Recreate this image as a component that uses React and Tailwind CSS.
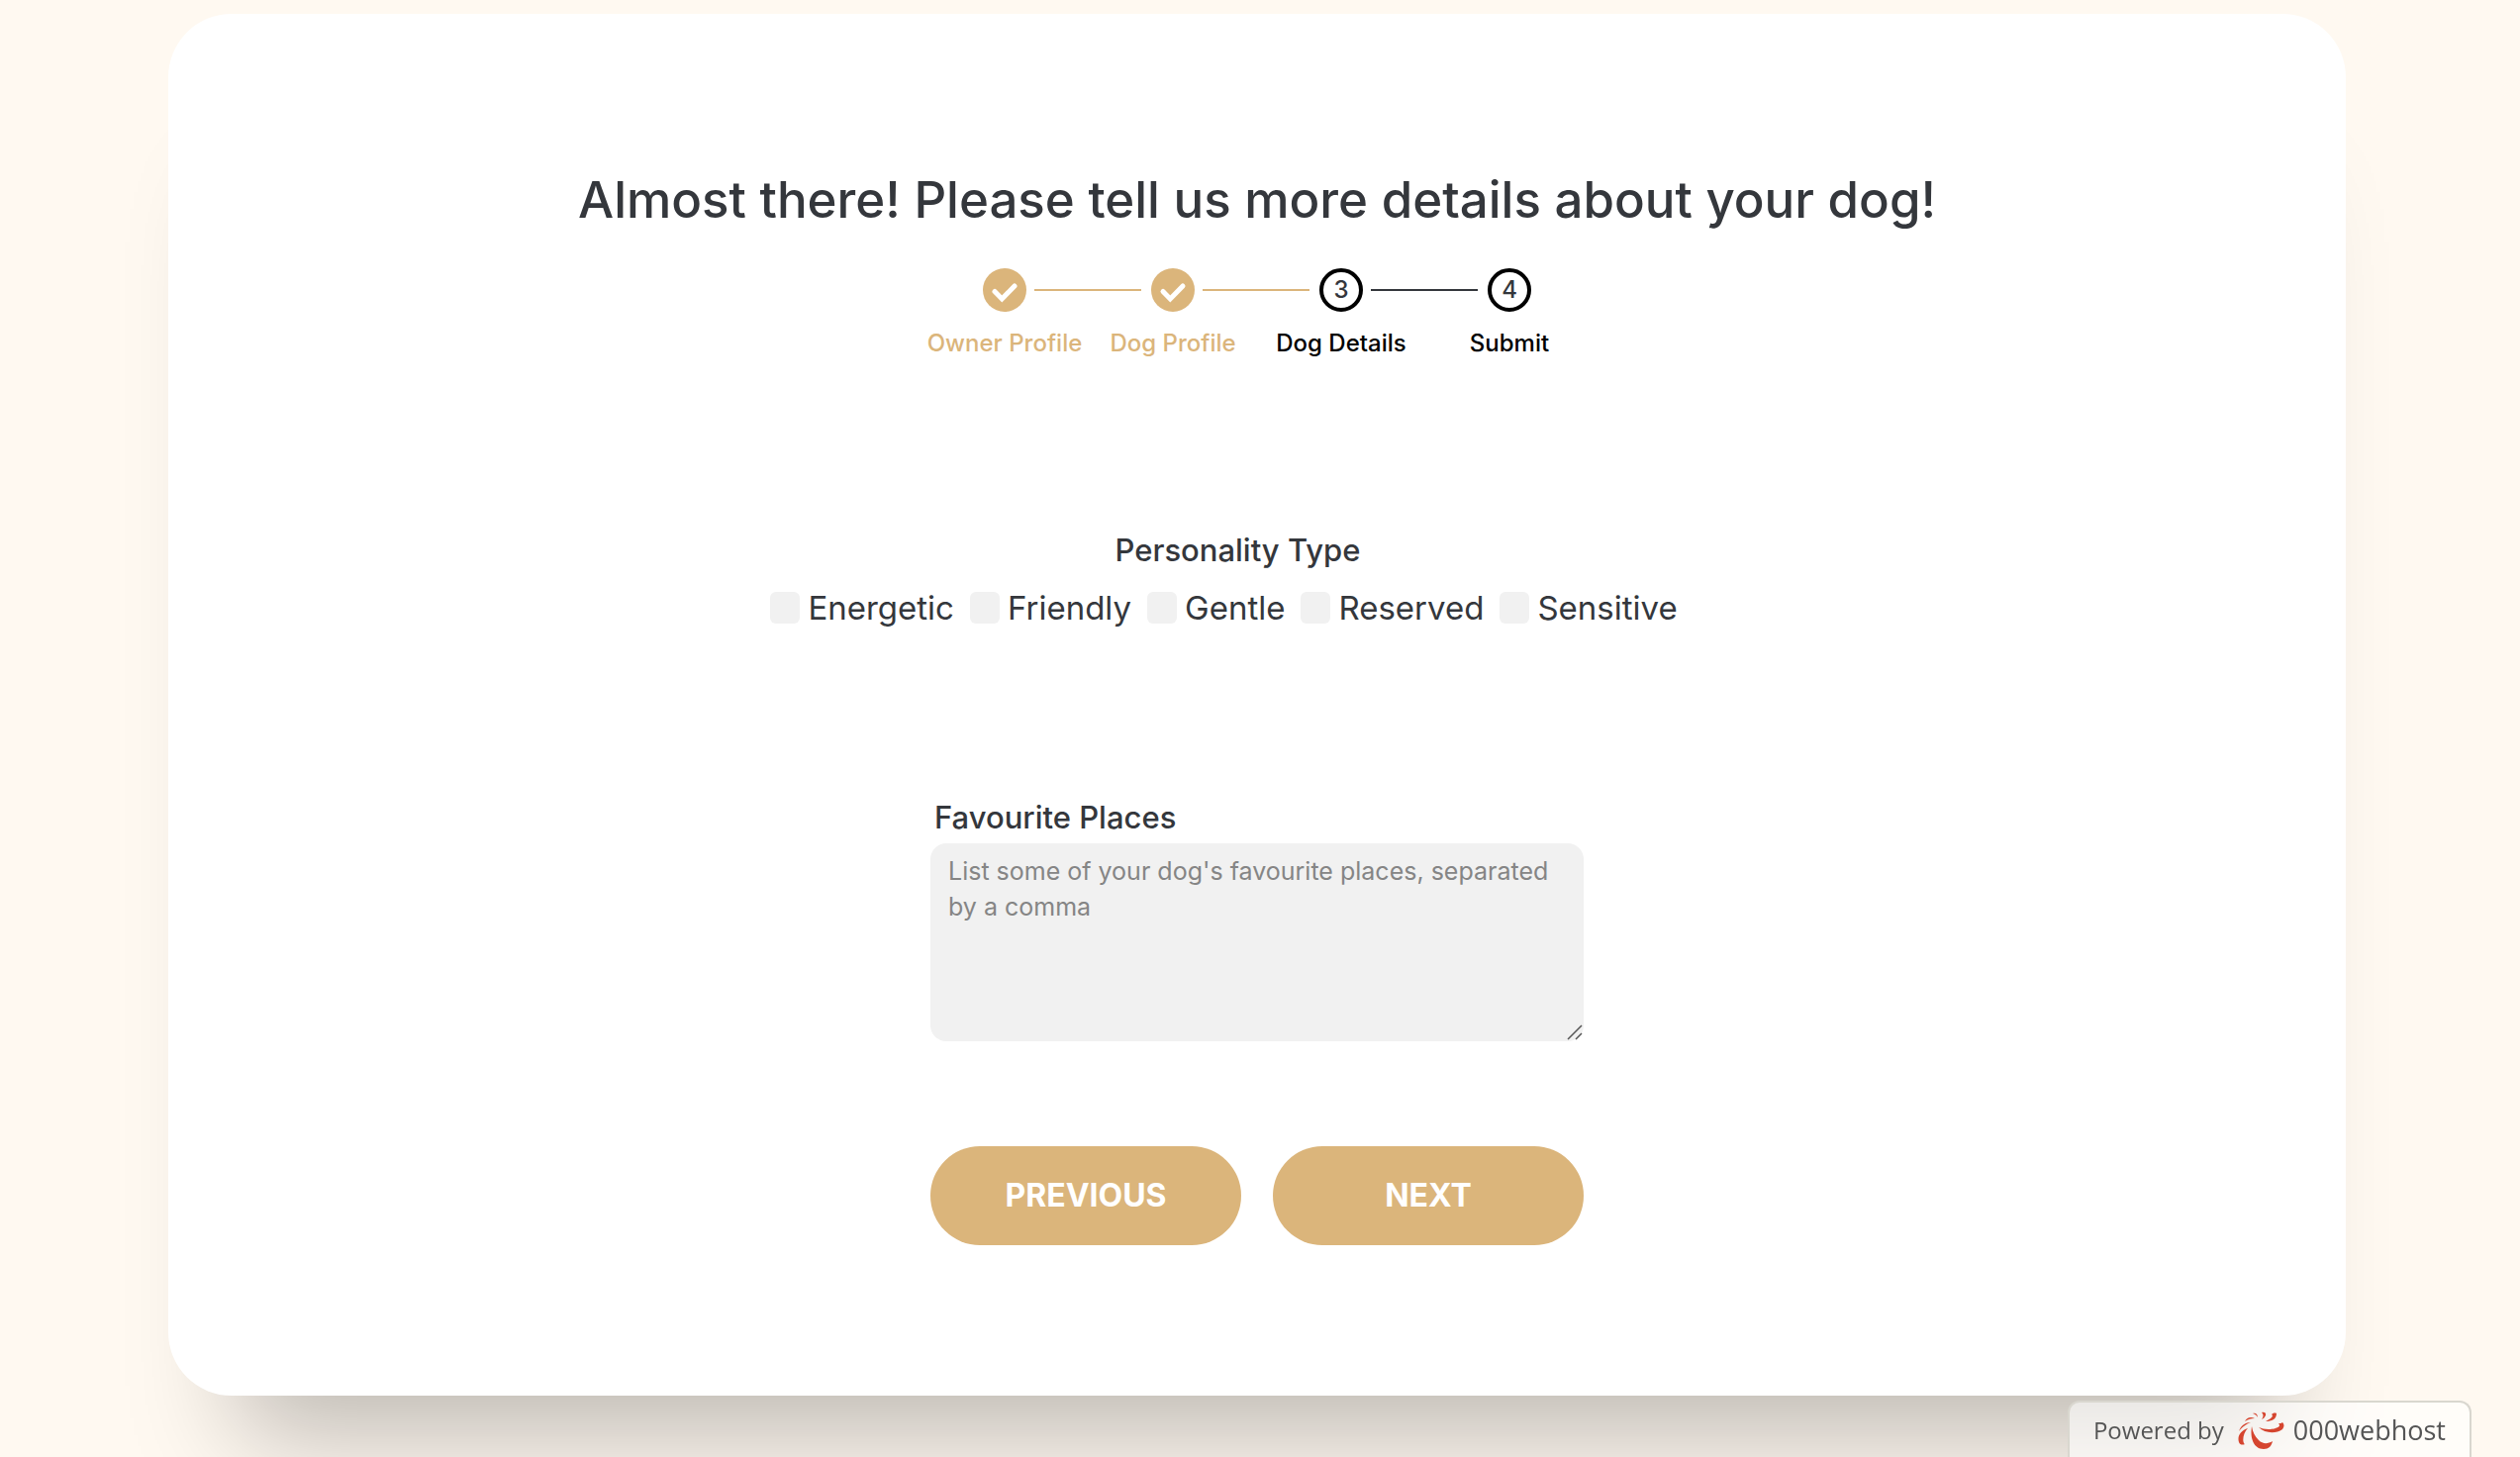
const steps = [
  { label: "Owner Profile", done: true },
  { label: "Dog Profile", done: true },
  { label: "Dog Details", done: false },
  { label: "Submit", done: false },
];

const personalities = ["Energetic", "Friendly", "Gentle", "Reserved", "Sensitive"];

function Step({ label, done, number, last }) {
  return (
    <li className="flex w-[170px] flex-col items-center">
      <div className="grid w-full grid-cols-[1fr_44px_1fr] items-center">
        <span />
        {done ? (
          <span className="size-11 rounded-full bg-[#dbb57b] text-white">
            <svg viewBox="0 0 44 44" className="size-11" fill="none" stroke="currentColor" strokeWidth="5" aria-hidden="true">
              <path d="M12 23.5 19.3 31 32 18" strokeLinecap="round" />
            </svg>
          </span>
        ) : (
          <span className="flex size-11 items-center justify-center rounded-full border-4 border-black text-2xl font-medium">
            {number}
          </span>
        )}
        {!last && (
          <span className={done ? "ml-2 -mr-[53px] h-0.5 bg-[#dbb57b]" : "ml-2 -mr-[53px] h-0.5 bg-[#34373c]"} />
        )}
      </div>
      <span
        className={
          done
            ? "mt-3.5 whitespace-nowrap text-2xl leading-9 font-medium text-[#dbb57b]"
            : "mt-3.5 whitespace-nowrap text-2xl leading-9 font-medium text-black"
        }
      >
        {label}
      </span>
    </li>
  );
}

function HostMark() {
  return (
    <svg viewBox="12 11 48 40" className="mr-2 ml-3.5 h-10 w-12" fill="#d5452f" aria-hidden="true">
      <path d="M26 27 C24 39 28 50 38 50 C43 50 46 47 47 42 C42 45 37 45 33 41 C29 37 27 33 26 27Z" />
      <path d="M33 28 C39 34 50 35 57 30 C59 27 59 25 57 23 C56 24 55 24 53 24 C57 28 48 30 43 30 C39 30 36 29 33 28Z" />
      <path d="M40 22 C46 22 51 20 51 14 C49 13 47 14 46 15 C49 17 44 20 40 22Z" />
      <path d="M36 13 C38 12 41 13 40 16 C39 18 38 19 36 20 C38 17 38 15 36 13Z" />
      <path d="M22 29 C15 31 11 37 13 43 C14 46 17 46 19 45 C16 43 17 34 22 29Z" />
      <path d="M25 23 C20 23 15 26 13 32 C17 27 20 25 25 23Z" />
      <path d="M29 19 C25 17 21 18 19 22 C22 20 25 19 29 19Z" />
      <path d="M32 18 C32 15 30 13 27 14 C30 15 31 16 32 18Z" />
    </svg>
  );
}

export default function App() {
  return (
    <div className="min-h-screen overflow-hidden bg-[#fff9f1] pt-3.5 font-['Inter',sans-serif] text-[#34373c]">
      <main className="mr-[176px] ml-[170px] flex min-h-[1396px] flex-col items-center rounded-[64px] bg-white pt-[148px] shadow-[0_110px_100px_-70px_rgba(0,0,0,0.26)]">
        <h1 className="text-[51px] leading-[80px] font-medium">
          Almost there! Please tell us more details about your dog!
        </h1>
        <ol className="mt-[29px] flex">
          {steps.map((s, i) => (
            <Step key={s.label} {...s} number={i + 1} last={i === steps.length - 1} />
          ))}
        </ol>
        <form className="mt-[169px] flex flex-col items-center">
          <fieldset className="mr-[67px] flex flex-col items-center">
            <legend className="mx-auto pl-7 text-[31px] leading-11 font-medium">Personality Type</legend>
            <div className="mt-3 flex gap-4">
              {personalities.map((p) => (
                <label key={p} className="flex items-center gap-2 text-[33px] leading-12">
                  <input type="checkbox" className="h-8 w-[30px] appearance-none rounded-md bg-[#f1f1f1] checked:bg-[#dbb57b]" />
                  {p}
                </label>
              ))}
            </div>
          </fieldset>
          <div className="mt-[166px] w-[660px]">
            <label htmlFor="places" className="ml-1 block text-[31px] leading-11 font-medium">
              Favourite Places
            </label>
            <div className="relative mt-1">
              <textarea
                id="places"
                placeholder="List some of your dog's favourite places, separated by a comma"
                className="block h-[200px] w-full resize-none rounded-2xl bg-[#f1f1f1] px-[18px] py-2.5 text-[25px] leading-9 placeholder:text-[#858585]"
              />
              <svg viewBox="0 0 16 16" className="absolute right-px bottom-px size-4" stroke="#555" strokeWidth="1.5" aria-hidden="true">
                <path d="M1 15 15 1M9 15l6-6" />
              </svg>
            </div>
            <div className="mt-[106px] grid grid-cols-2 gap-8">
              <button type="button" className="h-[100px] rounded-[50px] bg-[#dbb57b] text-[32px] font-bold text-white">
                PREVIOUS
              </button>
              <button type="button" className="h-[100px] rounded-[50px] bg-[#dbb57b] text-[32px] font-bold text-white">
                NEXT
              </button>
            </div>
          </div>
        </form>
      </main>
      <a
        href="#host"
        className="fixed right-[49px] bottom-0 flex h-[57px] items-center rounded-t-xl border-2 border-b-0 border-[#d9d7cf] bg-white/60 px-6 font-['Open_Sans',sans-serif] text-2xl text-[#555]"
      >
        Powered by <HostMark /> <span className="text-[27px] font-medium">000webhost</span>
      </a>
    </div>
  );
}
